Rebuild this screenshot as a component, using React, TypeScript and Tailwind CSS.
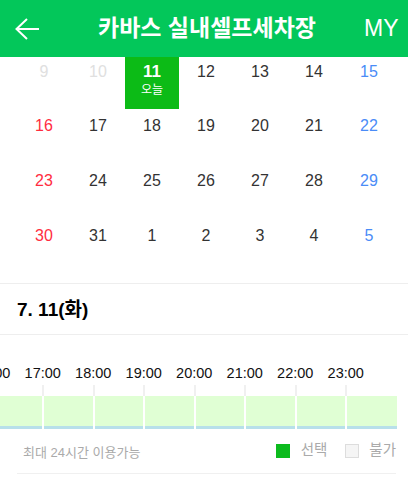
const font = { fontFamily: '"Liberation Sans", "Noto Sans CJK KR", sans-serif' }

const rows = [
  [
    { d: 9, c: 'text-[#e0e0e0]' },
    { d: 10, c: 'text-[#e0e0e0]' },
    { d: 11, today: true },
    { d: 12 },
    { d: 13 },
    { d: 14 },
    { d: 15, c: 'text-[#4a8cf7]' },
  ],
  [{ d: 16, c: 'text-[#ff2d3f]' }, { d: 17 }, { d: 18 }, { d: 19 }, { d: 20 }, { d: 21 }, { d: 22, c: 'text-[#4a8cf7]' }],
  [{ d: 23, c: 'text-[#ff2d3f]' }, { d: 24 }, { d: 25 }, { d: 26 }, { d: 27 }, { d: 28 }, { d: 29, c: 'text-[#4a8cf7]' }],
  [{ d: 30, c: 'text-[#ff2d3f]' }, { d: 31 }, { d: 1 }, { d: 2 }, { d: 3 }, { d: 4 }, { d: 5, c: 'text-[#4a8cf7]' }],
]

const hours = ['16:00', '17:00', '18:00', '19:00', '20:00', '21:00', '22:00', '23:00']

export default function App() {
  return (
    <div style={font} className="h-[477px] w-[408px] overflow-hidden bg-white">
      {/* Header */}
      <header className="flex h-[57px] items-center bg-[#03c75a] text-white">
        <svg className="ml-[15px] h-[24px] w-[24px]" viewBox="0 0 24 24" fill="none" stroke="white" strokeWidth="2">
          <path d="M1.5 12H24M12 2L1.5 12L12 22" />
        </svg>
        <h1 className="ml-[57px] w-[222px] text-center text-[23px] leading-none font-bold whitespace-nowrap">카바스 실내셀프세차장</h1>
        <span className="ml-[46px] text-[23px] leading-none">MY</span>
      </header>

      {/* Calendar */}
      <div className="pr-[12px] pl-[17px]">
        {rows.map((row, i) => (
          <div key={i} className={i === 0 ? 'grid h-[52px] grid-cols-[54px_54px_54px_54px_54px_54px_56px]' : 'grid h-[55px] grid-cols-[54px_54px_54px_54px_54px_54px_56px]'}>
            {row.map((cell) =>
              cell.today ? (
                <div key={cell.d} className="flex flex-col items-center bg-[#0cbb16] pt-[5px] text-white">
                  <span className="text-[17px] leading-[19px] font-bold">{cell.d}</span>
                  <span className="mt-[2px] text-[12px] leading-[14px]">오늘</span>
                </div>
              ) : (
                <div
                  key={cell.d}
                  className={`text-center text-[16px] leading-[19px] ${i > 0 ? 'pt-[7px]' : 'pt-[5px]'} ${cell.c ?? 'text-[#333333]'}`}
                >
                  {cell.d}
                </div>
              ),
            )}
          </div>
        ))}
      </div>

      {/* Selected date */}
      <div className="mt-[9px] flex h-[52px] items-center border-y border-[#eeeeee] pt-[3px] pl-[17px] text-[19px] font-bold text-black">
        7. 11(화)
      </div>

      {/* Time table */}
      <div className="w-[397px] overflow-hidden">
        <div className="mt-[28px] ml-[-33px] flex w-[430px] text-[14.5px] leading-[20px] text-[#111111]">
          {hours.map((h) => (
            <span key={h} className="w-[50.5px] shrink-0 text-center">
              {h}
            </span>
          ))}
        </div>
        <div className="mt-[2px] ml-[-6.5px] flex h-[44px] w-[404px]">
          {hours.map((h, i) => (
            <div key={h} className="flex w-[50.5px] shrink-0 flex-col">
              <div className={i < 7 ? 'h-[11px] border-r-[2px] border-[#f0f0f0]' : 'h-[11px]'} />
              <div className={i < 7 ? 'h-[30px] border-r-[2px] border-white bg-[#e0ffd4]' : 'h-[30px] bg-[#e0ffd4]'} />
              <div className={i < 7 ? 'h-[3px] border-r-[2px] border-white bg-[#b8e0ea]' : 'h-[3px] bg-[#b8e0ea]'} />
            </div>
          ))}
        </div>
      </div>

      {/* Legend */}
      <div className="ml-[17px] flex h-[45px] w-[379px] items-center border-b border-[#f0f0f0] pl-[6px] text-[#aaaaaa]">
        <span className="mt-[3px] text-[13px]">최대 24시간 이용가능</span>
        <span className="ml-auto h-[14px] w-[14px] bg-[#0cbb1e]" />
        <span className="mr-[1px] ml-[11px] text-[14.5px]">선택</span>
        <span className="ml-[17px] h-[14px] w-[14px] border border-[#dddddd] bg-[#f5f5f5]" />
        <span className="ml-[10px] text-[14.5px]">불가</span>
      </div>
    </div>
  )
}
